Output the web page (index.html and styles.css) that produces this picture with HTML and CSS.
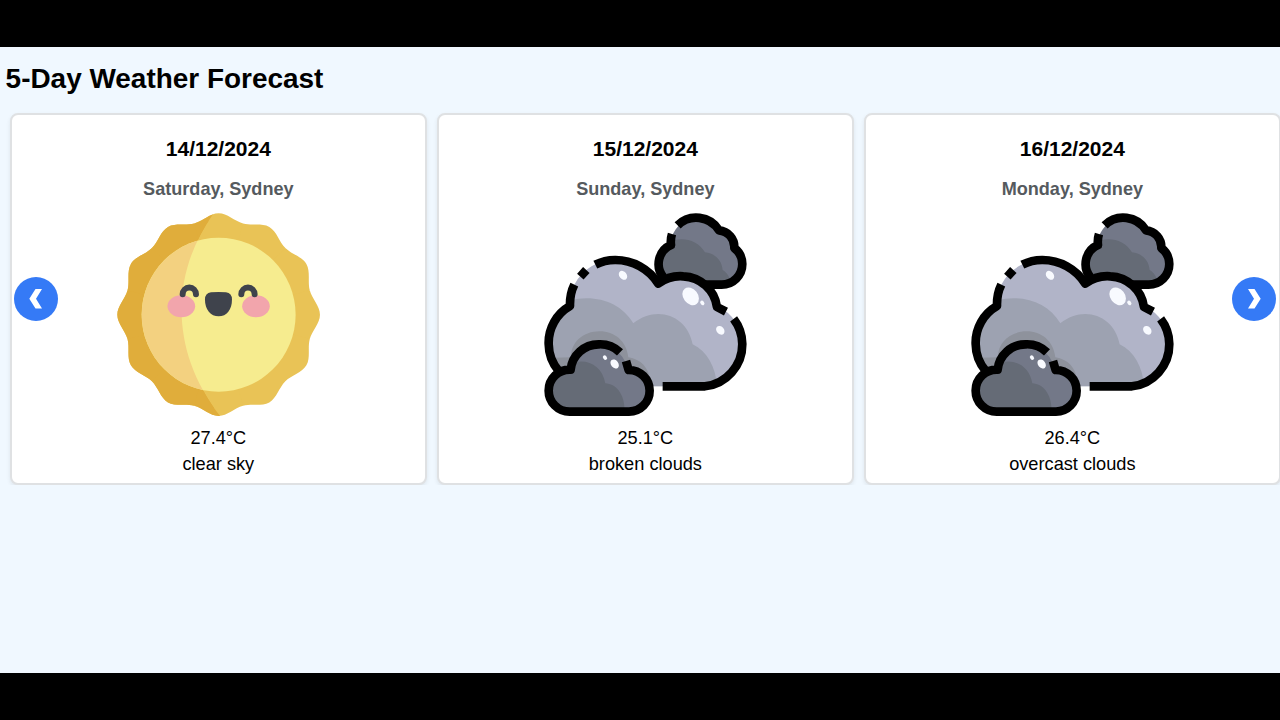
FILE: index.html
```html
<!DOCTYPE html>
<html lang="en">
<head>
<meta charset="utf-8">
<title>5-Day Weather Forecast</title>
<link rel="stylesheet" href="styles.css">
</head>
<body>
<svg class="defs" width="0" height="0" aria-hidden="true">
  <defs>
    <path id="lobe" d="M0 0L-73.3 -273.4C-47 -280.4 -26 -304 0 -304S47 -280.4 73.3 -273.4Z"/>
    <g id="rays">
      <circle r="281"/>
      <use href="#lobe"/><use href="#lobe" transform="rotate(30)"/><use href="#lobe" transform="rotate(60)"/><use href="#lobe" transform="rotate(90)"/><use href="#lobe" transform="rotate(120)"/><use href="#lobe" transform="rotate(150)"/><use href="#lobe" transform="rotate(180)"/><use href="#lobe" transform="rotate(210)"/><use href="#lobe" transform="rotate(240)"/><use href="#lobe" transform="rotate(270)"/><use href="#lobe" transform="rotate(300)"/><use href="#lobe" transform="rotate(330)"/>
    </g>
    <clipPath id="shade"><path d="M0 0H326L308 28C180 210 180 440 331 633V660H0Z"/></clipPath>
    <clipPath id="bigClip"><path id="bigShape" d="M168 543A127 127 0 0 1 105 302A136 136 0 0 1 118 238A136 136 0 0 1 240 164A152 152 0 0 1 370 235A110 110 0 0 1 445 213A106 106 0 0 1 547 303A127 127 0 0 1 622 416A127 127 0 0 1 510 543Z"/></clipPath>
    <clipPath id="topClip"><path id="topShape" d="M434 238A62 62 0 0 1 407 119A79 79 0 0 1 552 75A50 50 0 0 1 598 128A62 62 0 0 1 560 238Z"/></clipPath>
    <clipPath id="smallClip"><path id="smallShape" d="M104 619A63 63 0 0 1 107 493A86 86 0 0 1 275 482L280 494A62.500 62.500 0 0 1 282 619Z"/></clipPath>
    <symbol id="clouds" viewBox="27 23 610 610">
      <use href="#topShape" fill="#737888"/>
      <g clip-path="url(#topClip)" fill="#656b76">
        <path d="M360 250V110H405C445 90 495 98 519 139C552 143 570 165 572 192C586 200 594 215 597 230V250Z" transform="translate(-9 2)"/>
      </g>
      <g class="ink">
        <path d="M510 238H560A62 62 0 0 0 622 176A62 62 0 0 0 598 128A50 50 0 0 0 552 75A80 80 0 0 0 428 60"/>
        <path d="M411 86Q406 101 408 119A62 62 0 0 0 385 215"/>
      </g>
      <use href="#bigShape" fill="#b1b4c8"/>
      <g clip-path="url(#bigClip)">
        <path fill="#9da2b1" d="M20 560V285H105C180 266 258 290 295 354C365 298 457 330 473 417C520 440 547 492 547 560Z"/>
        <path fill="#8e929c" d="M30 560V458L108 456C107 412 144 378 194 378C238 378 275 407 280 456C318 461 342 490 344 520V560Z"/>
      </g>
      <g class="ink">
        <path d="M72 498A127 127 0 0 1 41 416A127 127 0 0 1 105 302Q104 266 118 238"/>
        <path d="M136 214L154 194"/>
        <path d="M181 178A136 136 0 0 1 240 164A152 152 0 0 1 370 235A110 110 0 0 1 445 213A106 106 0 0 1 546 305L573 319"/>
        <path d="M596 341A127 127 0 0 1 622 416A127 127 0 0 1 510 543H383"/>
      </g>
      <use href="#smallShape" fill="#737888"/>
      <path clip-path="url(#smallClip)" fill="#656b76" d="M30 630V475H105C154 456 202 480 211 534C245 536 274 570 268 630Z"/>
      <g class="ink">
        <path d="M255 441A86 86 0 0 0 192 417A84 84 0 0 0 107 493A63 63 0 0 0 41 556A63 63 0 0 0 104 619H282A62.500 62.500 0 0 0 344 556A62.500 62.500 0 0 0 281 494L273 467"/>
      </g>
      <g fill="#f8faff">
        <ellipse cx="264" cy="210" rx="11" ry="15" transform="rotate(-38 264 210)"/>
        <ellipse cx="467" cy="273" rx="22" ry="29" transform="rotate(-38 467 273)"/>
        <ellipse cx="502" cy="293" rx="5.500" ry="7.500" transform="rotate(-38 502 293)"/>
        <ellipse cx="556" cy="375" rx="11" ry="14.500" transform="rotate(-42 556 375)"/>
        <ellipse cx="239" cy="476" rx="11" ry="15" transform="rotate(-38 239 476)"/>
        <ellipse cx="210" cy="457" rx="5.500" ry="7.500" transform="rotate(-38 210 457)"/>
      </g>
    </symbol>
  </defs>
</svg>
<main class="page">
  <h1 class="title">5-Day Weather Forecast</h1>
  <section class="carousel">
    <article class="card">
      <h2 class="date">14/12/2024</h2>
      <h3 class="place">Saturday, Sydney</h3>
      <svg class="weather" viewBox="21 23 610 610" aria-label="clear sky">
        <use href="#rays" transform="translate(326 328)" fill="#e9c356"/>
        <g clip-path="url(#shade)"><use href="#rays" transform="translate(326 328)" fill="#e0ad3b"/></g>
        <circle cx="326" cy="328" r="231" fill="#f6ec8f"/>
        <circle cx="326" cy="328" r="231" fill="#f3d180" clip-path="url(#shade)"/>
        <ellipse cx="214" cy="303" rx="41.500" ry="33" fill="#f2a5ac"/>
        <ellipse cx="438" cy="303" rx="41.500" ry="33" fill="#f2a5ac"/>
        <g fill="none" stroke="#3f434c" stroke-width="18" stroke-linecap="round">
          <path d="M218 267A20 20.500 0 0 1 258 267"/>
          <path d="M394 267A20 20.500 0 0 1 434 267"/>
        </g>
        <path fill="#3f434c" d="M303 261Q326 259 348 261Q366 263 366 283C366 312 350 333 326 333S285 312 285 283Q285 263 303 261Z"/>
      </svg>
      <p class="info">27.4°C</p>
      <p class="info">clear sky</p>
    </article>
    <article class="card">
      <h2 class="date">15/12/2024</h2>
      <h3 class="place">Sunday, Sydney</h3>
      <svg class="weather" aria-label="broken clouds"><use href="#clouds"/></svg>
      <p class="info">25.1°C</p>
      <p class="info">broken clouds</p>
    </article>
    <article class="card">
      <h2 class="date">16/12/2024</h2>
      <h3 class="place">Monday, Sydney</h3>
      <svg class="weather" aria-label="overcast clouds"><use href="#clouds"/></svg>
      <p class="info">26.4°C</p>
      <p class="info">overcast clouds</p>
    </article>
    <button class="nav prev" aria-label="Previous"><svg viewBox="0 0 44 44"><path d="M15.300 21.700L21.500 12H28L22 21.700L28 31.500H21.500Z"/></svg></button>
    <button class="nav next" aria-label="Next"><svg viewBox="0 0 44 44"><path d="M28.700 21.700L22.500 12H16L22 21.700L16 31.500H22.500Z"/></svg></button>
  </section>
</main>
</body>
</html>
```
FILE: styles.css
```css
* { box-sizing: border-box; }

body {
  margin: 0;
  height: 720px;
  padding: 47px 0;
  overflow: hidden;
  background: #000;
  color: #000;
  font-family: "Liberation Sans", Arial, sans-serif;
}

.defs { position: absolute; }

.page {
  height: 626px;
  background: #f0f8ff;
  overflow: hidden;
}

.title {
  margin: 0;
  padding: 15px 0 0 5.6px;
  font-size: 27.95px;
  line-height: 33px;
}

.carousel {
  position: relative;
  display: flex;
  gap: 9.5px;
  height: 374px;
  margin-top: 16px;
  padding: 2px 0 0 9.6px;
  overflow: hidden;
}

.card {
  flex: 0 0 417.5px;
  height: 371.5px;
  padding: 21px 0 0;
  display: flex;
  flex-direction: column;
  align-items: center;
  background: #fff;
  border: 2px solid #dfe1e3;
  border-radius: 8px;
  box-shadow: 0 2px 4px rgba(0, 0, 0, 0.08);
}

.date {
  margin: 0;
  font-size: 21px;
  line-height: 26px;
}

.place {
  margin: 16px 0 0;
  font-size: 18.1px;
  line-height: 22px;
  color: #555a5e;
}

.weather {
  flex: none;
  width: 203.3px;
  height: 203.3px;
  margin: 12.7px 0 10.2px;
}

.ink {
  fill: none;
  stroke: #000;
  stroke-width: 26px;
  stroke-linejoin: round;
}

.info {
  margin: 0;
  font-size: 18.2px;
  line-height: 25.6px;
}

.nav {
  position: absolute;
  top: 166px;
  width: 44px;
  height: 44px;
  padding: 0;
  border: 0;
  border-radius: 50%;
  background: #357af6;
}

.nav svg { display: block; fill: #fff; }
.prev { left: 14px; }
.next { right: 4.5px; }
```
